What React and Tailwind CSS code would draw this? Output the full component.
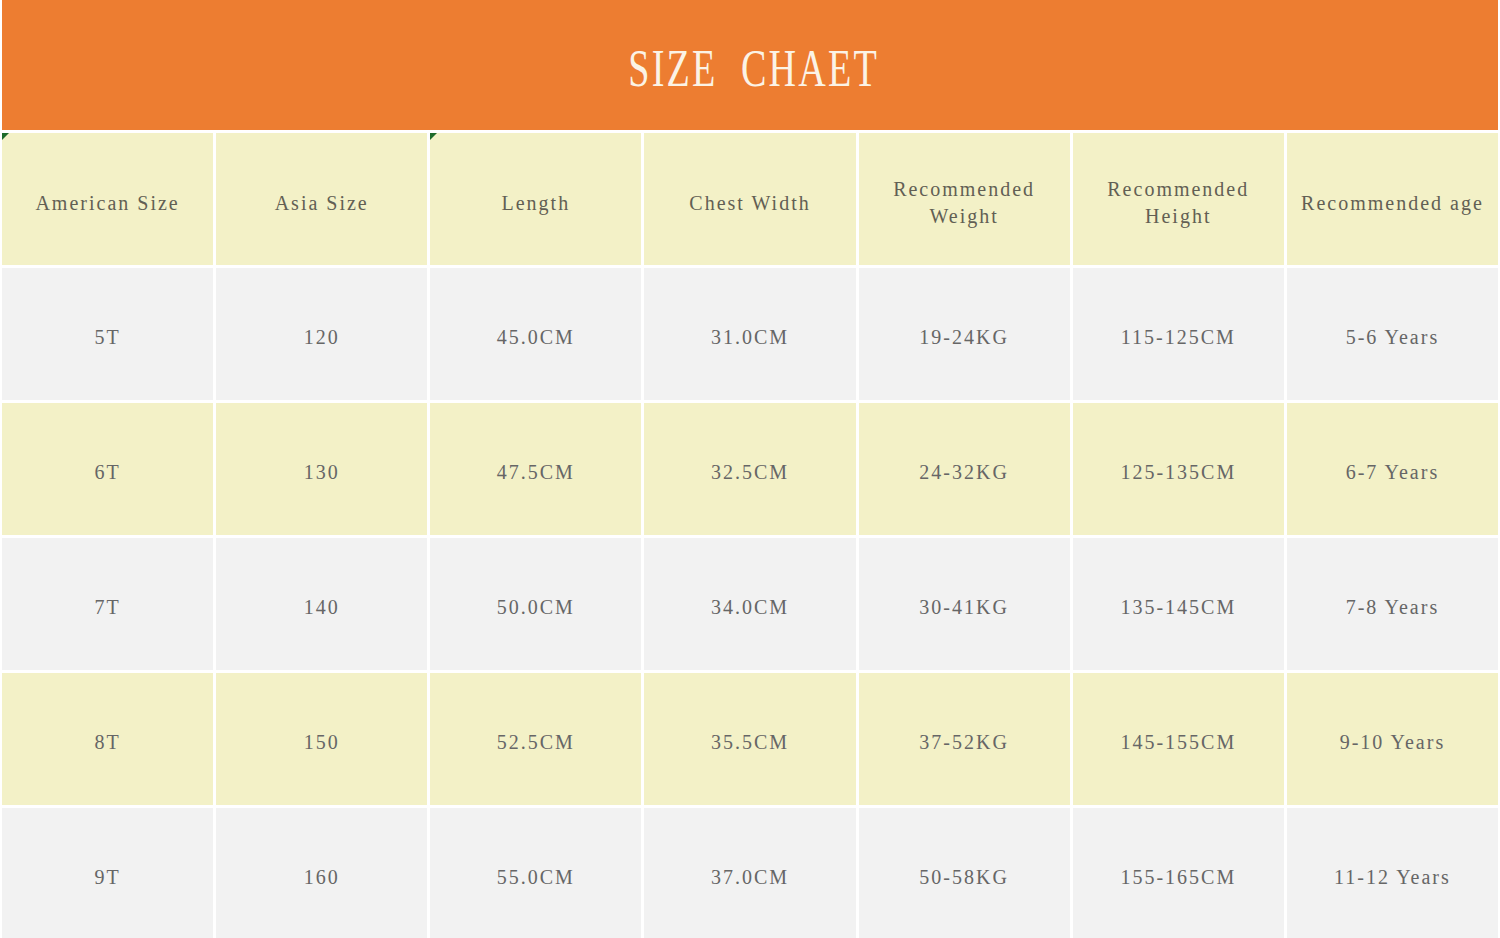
/*
 * App.jsx — kids' size chart, spreadsheet style.
 * Orange title banner, cream header row, then rows alternating grey / cream.
 */

const headers = [
  'American Size',
  'Asia Size',
  'Length',
  'Chest Width',
  'Recommended Weight',
  'Recommended Height',
  'Recommended age',
]

const rows = [
  ['5T', '120', '45.0CM', '31.0CM', '19-24KG', '115-125CM', '5-6 Years'],
  ['6T', '130', '47.5CM', '32.5CM', '24-32KG', '125-135CM', '6-7 Years'],
  ['7T', '140', '50.0CM', '34.0CM', '30-41KG', '135-145CM', '7-8 Years'],
  ['8T', '150', '52.5CM', '35.5CM', '37-52KG', '145-155CM', '9-10 Years'],
  ['9T', '160', '55.0CM', '37.0CM', '50-58KG', '155-165CM', '11-12 Years'],
]

// Little green corner flag, like the one Excel draws on a cell
function CornerFlag() {
  return (
    <svg className="absolute left-0 top-0" width="7" height="7" viewBox="0 0 7 7">
      <polygon points="0,0 7,0 0,7" fill="#1e6b2a" />
    </svg>
  )
}

export default function App() {
  return (
    <div className="w-full min-h-screen bg-white px-[2px] font-['Liberation_Serif',serif] overflow-hidden">
      {/* === TITLE BANNER === */}
      <div className="h-[130px] bg-[#ed7d31] flex items-center justify-center">
        <h1 className="inline-block scale-x-[0.72] text-[53px] tracking-[3px] text-[#fbf3e6] font-normal leading-none pt-[6px] pl-[10px]">
          SIZE&nbsp;&nbsp;CHAET
        </h1>
      </div>

      {/* === TABLE === */}
      <div className="grid grid-cols-7 auto-rows-[132px] gap-[3px] pt-[3px]">
        {headers.map((h, i) => (
          <div
            key={h}
            className="relative bg-[#f3f1c7] flex items-center justify-center text-center px-3 pt-[8px] text-[20px] leading-[27px] tracking-[2px] text-[#625f54]"
          >
            {(i === 0 || i === 2) && <CornerFlag />}
            {h}
          </div>
        ))}

        {rows.map((row, r) =>
          row.map((cell, c) => (
            <div
              key={`${r}-${c}`}
              className={`${r % 2 === 0 ? 'bg-[#f2f2f2]' : 'bg-[#f3f1c7]'} flex items-center justify-center pt-[6px] text-[20px] tracking-[2px] text-[#666666]`}
            >
              {cell}
            </div>
          ))
        )}
      </div>
    </div>
  )
}
